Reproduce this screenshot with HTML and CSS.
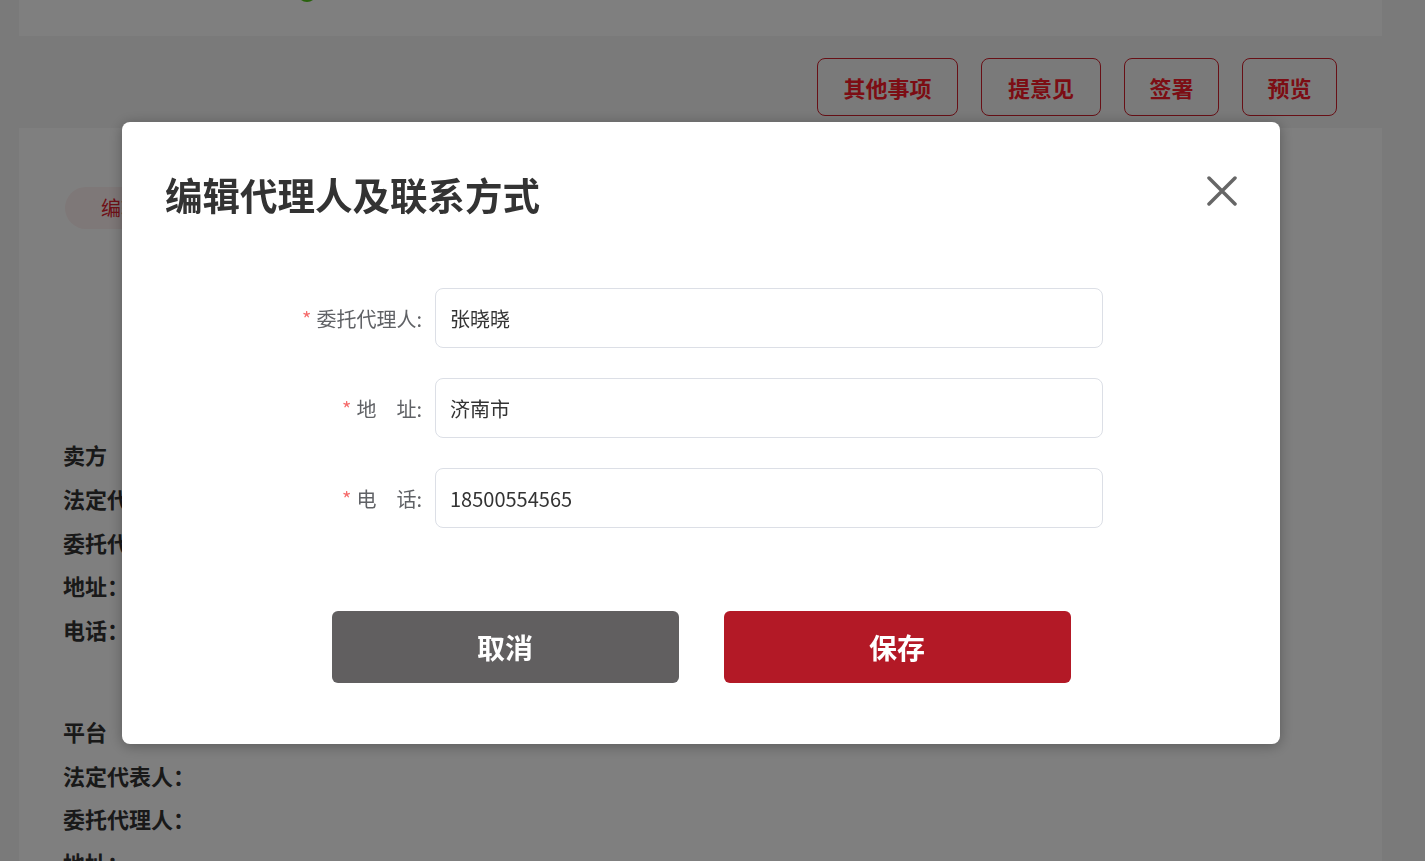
FILE: index.html
```html
<!DOCTYPE html>
<html lang="zh-CN">
<head>
    <meta charset="UTF-8">
    <title>编辑代理人及联系方式</title>
    <link rel="stylesheet" href="styles.css">
</head>
<body>
    <div class="page">
        <div class="top-panel">
            <span class="step-dot"></span>
        </div>

        <div class="toolbar">
            <button class="tool-btn btn-w141">其他事项</button>
            <button class="tool-btn btn-w120">提意见</button>
            <button class="tool-btn btn-w95">签署</button>
            <button class="tool-btn btn-w95">预览</button>
        </div>

        <div class="main-panel">
            <div class="edit-pill">编辑</div>

            <div class="party">
                <div class="party-line">卖方</div>
                <div class="party-line">法定代表人：</div>
                <div class="party-line">委托代理人：</div>
                <div class="party-line">地址：</div>
                <div class="party-line">电话：</div>
            </div>

            <div class="party">
                <div class="party-line">平台</div>
                <div class="party-line">法定代表人：</div>
                <div class="party-line">委托代理人：</div>
                <div class="party-line">地址：</div>
            </div>
        </div>
    </div>

    <!-- 弹窗 -->
    <div class="mask"></div>
    <div class="dialog">
        <div class="dialog-title">编辑代理人及联系方式</div>
        <button class="dialog-close" aria-label="关闭">
            <svg width="30" height="30" viewBox="0 0 30 30">
                <path d="M2 2 L28 28 M28 2 L2 28" stroke="#666" stroke-width="3.5" stroke-linecap="round" fill="none"/>
            </svg>
        </button>

        <div class="form">
            <div class="form-row">
                <label class="form-label"><span class="req">*</span>委托代理人:</label>
                <input class="form-input" type="text" value="张晓晓">
            </div>
            <div class="form-row">
                <label class="form-label"><span class="req">*</span>地　址:</label>
                <input class="form-input" type="text" value="济南市">
            </div>
            <div class="form-row">
                <label class="form-label"><span class="req">*</span>电　话:</label>
                <input class="form-input" type="text" value="18500554565">
            </div>
        </div>

        <div class="dialog-footer">
            <button class="btn btn-cancel">取消</button>
            <button class="btn btn-save">保存</button>
        </div>
    </div>
</body>
</html>
```

FILE: styles.css
```css
html, body {
    margin: 0;
    padding: 0;
    height: 100%;
    overflow: hidden;
}

body {
    background-color: #f5f5f5;
    font-family: "Noto Sans CJK SC", "Noto Sans", sans-serif;
}

.page {
    width: 1363px;
    margin-left: 19px;
}

.top-panel {
    height: 36px;
    background-color: #fff;
    display: flex;
    padding-left: 278px;
}

.step-dot {
    width: 20px;
    height: 20px;
    margin-top: -18px;
    border-radius: 50%;
    background-color: #52c41a;
}

.toolbar {
    height: 92px;
    display: flex;
    justify-content: flex-end;
    align-items: flex-start;
    gap: 23px;
    padding: 22px 45px 0 0;
    box-sizing: border-box;
}

.tool-btn {
    height: 58px;
    padding: 0;
    background: transparent;
    border: 1px solid #d0202c;
    border-radius: 8px;
    color: #f81a28;
    font-family: inherit;
    font-size: 22px;
    font-weight: bold;
    cursor: pointer;
}

.btn-w141 { width: 141px; }
.btn-w120 { width: 120px; }
.btn-w95 { width: 95px; }

.main-panel {
    height: 760px;
    background-color: #fff;
    padding: 59px 0 0 44px;
    box-sizing: border-box;
}

.edit-pill {
    display: inline-block;
    margin-left: 2px;
    height: 42px;
    line-height: 42px;
    padding: 0 36px;
    border-radius: 21px;
    background-color: #fdf0f0;
    color: #e0202e;
    font-size: 20px;
}

.party {
    margin-top: 204px;
}

.party + .party {
    margin-top: 58px;
}

.party-line {
    height: 43.75px;
    line-height: 43.75px;
    font-size: 22px;
    font-weight: bold;
    color: #333;
}

.mask {
    position: fixed;
    top: 0;
    left: 0;
    right: 0;
    bottom: 0;
    background-color: rgba(0, 0, 0, 0.5);
}

.dialog {
    position: fixed;
    left: 122px;
    top: 122px;
    width: 1158px;
    height: 622px;
    background-color: #fff;
    border-radius: 8px;
    box-shadow: 0 2px 14px rgba(0, 0, 0, 0.3);
    padding-top: 50px;
    box-sizing: border-box;
}

.dialog-title {
    padding-left: 43px;
    height: 43px;
    line-height: 43px;
    font-size: 37.5px;
    font-weight: bold;
    color: #333;
}

.dialog-close {
    position: absolute;
    top: 54px;
    right: 43px;
    width: 30px;
    height: 30px;
    padding: 0;
    border: none;
    background: none;
    cursor: pointer;
}

.form {
    margin-top: 73px;
    display: flex;
    flex-direction: column;
    gap: 30px;
}

.form-row {
    display: flex;
    align-items: center;
}

.form-label {
    width: 300px;
    text-align: right;
    font-size: 20px;
    color: #606266;
    margin-right: 13px;
}

.req {
    color: #f56c6c;
    margin-right: 5px;
}

.form-input {
    width: 668px;
    height: 60px;
    box-sizing: border-box;
    border: 1px solid #dcdfe6;
    border-radius: 8px;
    padding: 0 14px;
    font-family: inherit;
    font-size: 20px;
    color: #333;
    outline: none;
}

.dialog-footer {
    margin-top: 83px;
    display: flex;
    justify-content: center;
    gap: 45px;
}

.btn {
    width: 347px;
    height: 72px;
    border: none;
    border-radius: 6px;
    color: #fff;
    font-family: inherit;
    font-size: 28px;
    font-weight: bold;
    cursor: pointer;
}

.btn-cancel {
    background-color: #615f60;
}

.btn-save {
    background-color: #b31926;
}
```
